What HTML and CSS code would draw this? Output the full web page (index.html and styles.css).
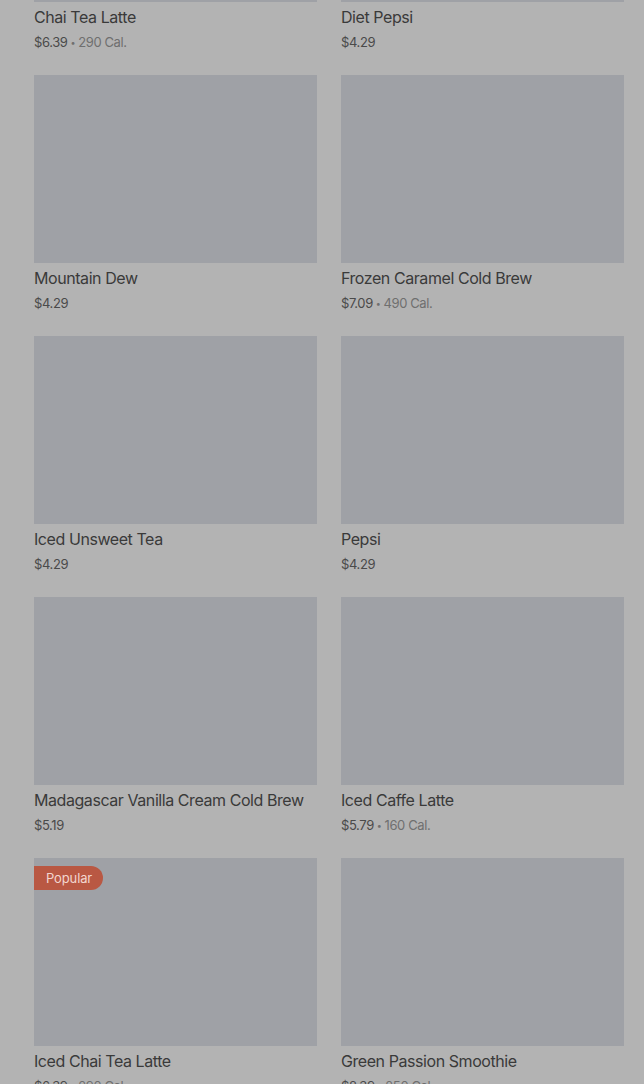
FILE: index.html
```html
<!DOCTYPE html>
<html lang="en">
<head>
  <meta charset="UTF-8" />
  <meta name="viewport" content="width=device-width, initial-scale=1.0"/>
  <title>Menu</title>
  <link rel="stylesheet" href="styles.css">
</head>
<body>

  <div class="menu-grid">
    <div class="item">
      <div class="item-image"></div>
      <h3 class="item-name">Chai Tea Latte</h3>
      <p class="item-price">$6.39<span class="dot">•</span><span class="cal">290 Cal.</span></p>
    </div>
    <div class="item">
      <div class="item-image"></div>
      <h3 class="item-name">Diet Pepsi</h3>
      <p class="item-price">$4.29</p>
    </div>

    <div class="item">
      <div class="item-image"></div>
      <h3 class="item-name">Mountain Dew</h3>
      <p class="item-price">$4.29</p>
    </div>
    <div class="item">
      <div class="item-image"></div>
      <h3 class="item-name">Frozen Caramel Cold Brew</h3>
      <p class="item-price">$7.09<span class="dot">•</span><span class="cal">490 Cal.</span></p>
    </div>

    <div class="item">
      <div class="item-image"></div>
      <h3 class="item-name">Iced Unsweet Tea</h3>
      <p class="item-price">$4.29</p>
    </div>
    <div class="item">
      <div class="item-image"></div>
      <h3 class="item-name">Pepsi</h3>
      <p class="item-price">$4.29</p>
    </div>

    <div class="item">
      <div class="item-image"></div>
      <h3 class="item-name">Madagascar Vanilla Cream Cold Brew</h3>
      <p class="item-price">$5.19</p>
    </div>
    <div class="item">
      <div class="item-image"></div>
      <h3 class="item-name">Iced Caffe Latte</h3>
      <p class="item-price">$5.79<span class="dot">•</span><span class="cal">160 Cal.</span></p>
    </div>

    <div class="item">
      <div class="item-image">
        <span class="badge">Popular</span>
      </div>
      <h3 class="item-name">Iced Chai Tea Latte</h3>
      <p class="item-price">$6.39<span class="dot">•</span><span class="cal">290 Cal.</span></p>
    </div>
    <div class="item">
      <div class="item-image"></div>
      <h3 class="item-name">Green Passion Smoothie</h3>
      <p class="item-price">$8.39<span class="dot">•</span><span class="cal">250 Cal.</span></p>
    </div>
  </div>

</body>
</html>
```

FILE: styles.css
```css
html, body {
  height: 100%;
  overflow: hidden;
}
body {
  font-family: Inter, "Noto Sans", sans-serif;
  background-color: #b3b3b3; /* page dimmed by backdrop */
  color: #3b3b3b;
  margin: 0;
  padding: 0 20px 0 34px;
}
.menu-grid {
  display: grid;
  grid-template-columns: 1fr 1fr;
  column-gap: 24px;
  row-gap: 20px;
  margin-top: -186px;
}
.item-image {
  position: relative;
  height: 188px;
  background-color: #9fa1a6;
}
.item-name {
  margin: 3px 0 0;
  font-size: 16px;
  font-weight: 400;
  line-height: 24px;
  letter-spacing: -0.027em;
  color: #3a3a3a;
}
.item-price {
  margin: 0;
  height: 26px;
  font-size: 13px;
  line-height: 26px;
  letter-spacing: -0.03em;
  color: #4a4a4a;
}
.dot {
  font-size: 9px;
  line-height: 1;
  margin: 0 3px;
  vertical-align: 1px;
  color: #6f6f6f;
}
.cal {
  color: #6f6f6f;
}
.badge {
  position: absolute;
  top: 8px;
  left: 0;
  padding: 0 11px 0 12px;
  height: 24px;
  line-height: 24px;
  font-size: 13px;
  letter-spacing: -0.01em;
  color: #f2d6cf;
  background-color: #b95843;
  border-radius: 0 12px 12px 0;
}
```
